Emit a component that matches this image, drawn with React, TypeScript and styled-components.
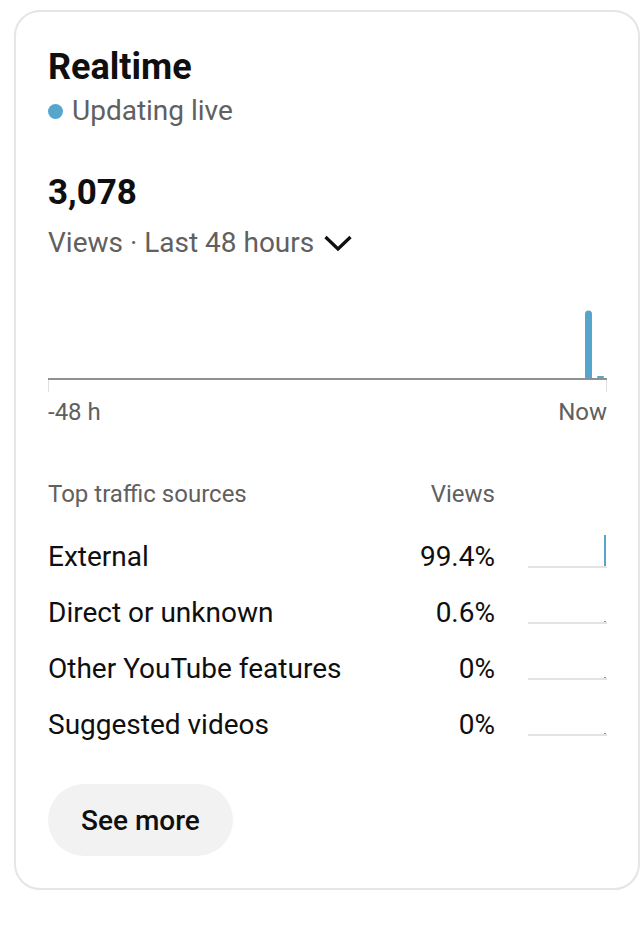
import React from "react";
import styled, { createGlobalStyle } from "styled-components";

interface Source {
  name: string;
  share: number;
}

const sources: Source[] = [
  { name: "External", share: 99.4 },
  { name: "Direct or unknown", share: 0.6 },
  { name: "Other YouTube features", share: 0 },
  { name: "Suggested videos", share: 0 },
];

const GlobalStyle = createGlobalStyle`
  body {
    margin: 0;
    background: #fff;
    font-family: Roboto, "Noto Sans", Arial, sans-serif;
    color: #0f0f0f;
  }
`;

const Card = styled.section`
  box-sizing: border-box;
  width: 626px;
  margin: 10px 0 0 14px;
  padding: 33px 31px 32px 32px;
  border: 2px solid #e5e5e5;
  border-radius: 26px;
  background: #fff;
`;

const Title = styled.h1`
  margin: 0;
  font-size: 36px;
  line-height: 44px;
  font-weight: 700;
`;

const LiveRow = styled.div`
  display: flex;
  align-items: center;
  gap: 9px;
  margin-top: 4px;
  font-size: 28px;
  line-height: 36px;
  color: #606060;
`;

const Dot = styled.span`
  width: 15px;
  height: 15px;
  border-radius: 50%;
  background: #55a5cc;
`;

const Total = styled.div`
  margin-top: 42px;
  font-size: 35px;
  line-height: 44px;
  font-weight: 700;
`;

const RangeRow = styled.div`
  display: flex;
  align-items: center;
  gap: 9px;
  margin-top: 10px;
  font-size: 28px;
  line-height: 36px;
  color: #606060;
`;

const Chart = styled.svg`
  display: block;
  margin-top: 11px;
`;

const AxisLabels = styled.div`
  display: flex;
  justify-content: space-between;
  margin-top: 4px;
  font-size: 24px;
  line-height: 32px;
  color: #606060;
`;

const TableHead = styled.div`
  display: grid;
  grid-template-columns: 1fr 120px 112px;
  margin-top: 50px;
  margin-bottom: 18px;
  font-size: 24px;
  line-height: 32px;
  color: #606060;
`;

const Right = styled.span`
  text-align: right;
`;

const SourceRow = styled.div`
  display: grid;
  grid-template-columns: 1fr 120px 112px;
  align-items: center;
  height: 56px;
  font-size: 28px;
  color: #0f0f0f;
`;

const Spark = styled.div`
  display: flex;
  justify-content: flex-end;
  align-items: flex-end;
  align-self: end;
  box-sizing: border-box;
  height: 33px;
  margin: 0 0 16px 33px;
  padding-right: 1px;
  border-bottom: 2px solid #e3e3e3;
`;

const SparkBar = styled.span`
  width: 2px;
  background: #55a5cc;
`;

const MoreButton = styled.button`
  display: block;
  margin-top: 32px;
  height: 72px;
  padding: 0 33px;
  border: none;
  border-radius: 36px;
  background: #f2f2f2;
  font-family: inherit;
  font-size: 28px;
  font-weight: 500;
  color: #0f0f0f;
  cursor: pointer;
`;

export default function App() {
  return (
    <>
      <GlobalStyle />
      <Card>
        <Title>Realtime</Title>
        <LiveRow>
          <Dot />
          Updating live
        </LiveRow>
        <Total>3,078</Total>
        <RangeRow>
          Views · Last 48 hours
          <svg width="30" height="18" viewBox="0 0 30 18">
            <path d="M2.5 3 L15 15 L27.5 3" fill="none" stroke="#0f0f0f" strokeWidth="3.2" />
          </svg>
        </RangeRow>
        <Chart width="559" height="120" viewBox="0 0 559 120">
          <line x1="0" y1="107" x2="559" y2="107" stroke="#909090" strokeWidth="2" />
          <line x1="0.5" y1="108" x2="0.5" y2="120" stroke="#e0e0e0" strokeWidth="1" />
          <line x1="558.5" y1="108" x2="558.5" y2="120" stroke="#e0e0e0" strokeWidth="1" />
          <path d="M537 106 L537 42 A3.5 3.5 0 0 1 544 42 L544 106 Z" fill="#55a5cc" />
          <rect x="549" y="104" width="7" height="2" rx="1" fill="#55a5cc" />
        </Chart>
        <AxisLabels>
          <span>-48 h</span>
          <span>Now</span>
        </AxisLabels>
        <TableHead>
          <span>Top traffic sources</span>
          <Right>Views</Right>
          <span />
        </TableHead>
        {sources.map((s) => (
          <SourceRow key={s.name}>
            <span>{s.name}</span>
            <Right>{s.share}%</Right>
            <Spark>
              <SparkBar style={{ height: `${Math.max(1, (s.share / 100) * 31)}px` }} />
            </Spark>
          </SourceRow>
        ))}
        <MoreButton>See more</MoreButton>
      </Card>
    </>
  );
}
